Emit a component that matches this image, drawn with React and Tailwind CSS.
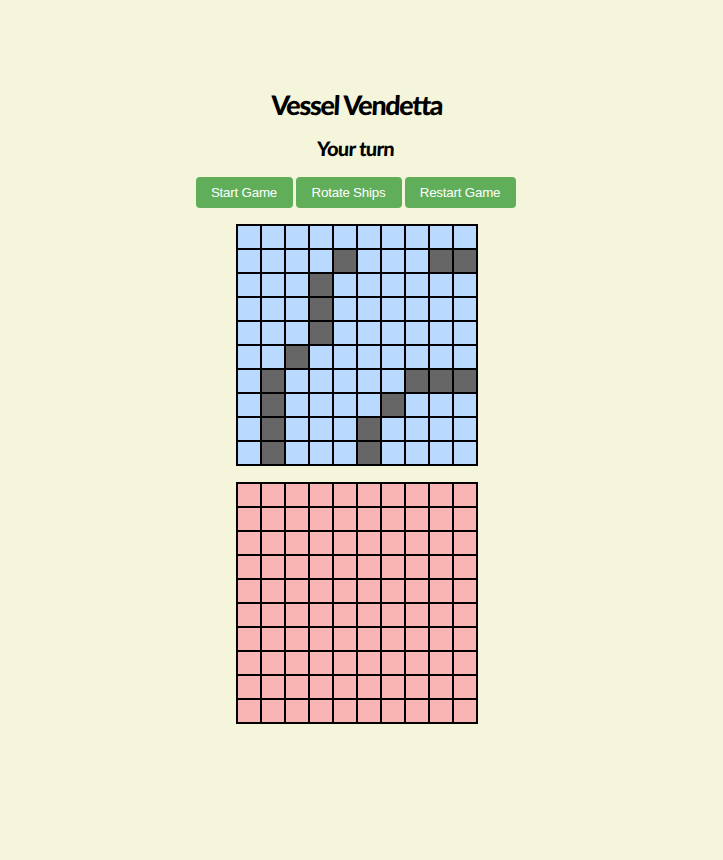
const SHIPS = new Set([
  '1-4', '1-8', '1-9',
  '2-3', '3-3', '4-3',
  '5-2',
  '6-1', '6-7', '6-8', '6-9',
  '7-1', '7-6',
  '8-1', '8-5',
  '9-1', '9-5',
]);

const cells = Array.from({ length: 100 }, (_, i) => `${Math.floor(i / 10)}-${i % 10}`);

function Board({ showShips, cellClass }) {
  return (
    <div className="grid grid-cols-[repeat(10,24px)] border border-black">
      {cells.map((id) => (
        <div
          key={id}
          className={`h-6 w-6 border border-black ${showShips && SHIPS.has(id) ? 'bg-[#666666]' : cellClass}`}
        />
      ))}
    </div>
  );
}

function GameButton({ width, children }) {
  return (
    <button className={`h-[31px] rounded-[4px] bg-[#60ae5a] text-center text-[13.333px] tracking-[-0.2px] text-white ${width}`}>
      {children}
    </button>
  );
}

const handFont = "font-['Lato',sans-serif] font-black -skew-x-3";

export default function App() {
  return (
    <div className="flex min-h-[860px] flex-col items-center bg-[#f5f5dc] pr-[10px] pt-[86px] font-['Liberation_Sans',Arial,sans-serif] text-black">
      <h1 className={`h-[37px] text-[27px] leading-[37px] tracking-[-1.4px] ${handFont}`}>Vessel Vendetta</h1>
      <h2 className={`mr-[2px] mt-[13px] h-[24px] text-[20px] leading-[24px] tracking-[-0.7px] ${handFont}`}>Your turn</h2>
      <div className="mr-[2px] mt-[17px] flex gap-[3px]">
        <GameButton width="w-[97px]">Start Game</GameButton>
        <GameButton width="w-[106px]">Rotate Ships</GameButton>
        <GameButton width="w-[111px]">Restart Game</GameButton>
      </div>
      <div className="mt-4 flex flex-col gap-4">
        <Board showShips cellClass="bg-[#b9d9ff]" />
        <Board cellClass="bg-[#f9b4b4]" />
      </div>
    </div>
  );
}
